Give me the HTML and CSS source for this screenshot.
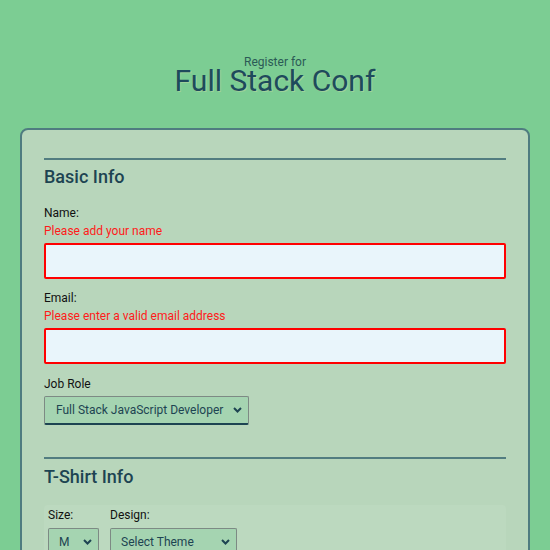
FILE: index.html
```html
<!DOCTYPE html>
<html lang="en">
<head>
<meta charset="utf-8">
<title>Register for Full Stack Conf</title>
<link rel="stylesheet" href="styles.css">
</head>
<body>
<header class="header">
  <span class="pre">Register for</span>
  <h1 class="title">Full Stack Conf</h1>
</header>
<main class="card">
  <section class="section">
    <hr class="rule">
    <h2 class="heading">Basic Info</h2>
    <div class="field first">
      <label class="label">Name:</label>
      <div class="error">Please add your name</div>
      <div class="input"></div>
    </div>
    <div class="field email">
      <label class="label">Email:</label>
      <div class="error">Please enter a valid email address</div>
      <div class="input tight"></div>
    </div>
    <div class="field job">
      <label class="label">Job Role</label>
      <div class="select role">
        <span>Full Stack JavaScript Developer</span>
        <svg class="chev" width="9" height="6" viewBox="0 0 9 6"><path d="M1 1 L4.5 4.5 L8 1" fill="none" stroke="#1d4452" stroke-width="2"/></svg>
      </div>
    </div>
  </section>
  <section class="section second">
    <hr class="rule">
    <h2 class="heading h2b">T-Shirt Info</h2>
    <div class="shirt">
      <div class="col size">
        <label class="label">Size:</label>
        <div class="select sm">
          <span>M</span>
          <svg class="chev" width="9" height="6" viewBox="0 0 9 6"><path d="M1 1 L4.5 4.5 L8 1" fill="none" stroke="#1d4452" stroke-width="2"/></svg>
        </div>
      </div>
      <div class="col design">
        <label class="label">Design:</label>
        <div class="select theme">
          <span>Select Theme</span>
          <svg class="chev" width="9" height="6" viewBox="0 0 9 6"><path d="M1 1 L4.5 4.5 L8 1" fill="none" stroke="#1d4452" stroke-width="2"/></svg>
        </div>
      </div>
    </div>
  </section>
</main>
</body>
</html>
```

FILE: styles.css
```css
html, body {
  margin: 0;
  padding: 0;
}
body {
  background: #7ccd93;
  font-family: Roboto, "Liberation Sans", sans-serif;
  height: 550px;
  overflow: hidden;
}
.header {
  display: flex;
  flex-direction: column;
  align-items: center;
  padding-top: 56px;
}
.pre {
  font-size: 12px;
  line-height: 12px;
  color: #2b5a56;
}
.title {
  margin: 2px 0 0;
  font-size: 30px;
  line-height: 22px;
  font-weight: 400;
  color: #1e4a5c;
  text-shadow: 1px 1px 0 rgba(230, 220, 170, 0.35);
}
.card {
  margin: 36px 20px 0;
  background: #b8d6bb;
  border: 2px solid #4f7c80;
  border-radius: 8px;
  padding: 28px 22px 40px;
}
.rule {
  margin: 0;
  border: 0;
  border-top: 2px solid #527d80;
  height: 0;
}
.heading {
  margin: 6px 0 0;
  font-size: 18px;
  line-height: 22px;
  font-weight: 500;
  color: #1d4452;
}
.h2b {
  margin-top: 7px;
}
.field {
  display: flex;
  flex-direction: column;
  align-items: flex-start;
}
.first {
  margin-top: 16px;
}
.email {
  margin-top: 10px;
}
.job {
  margin-top: 11px;
}
.label {
  font-size: 12px;
  line-height: 18px;
  color: #111;
}
.error {
  font-size: 12px;
  line-height: 18px;
  color: #ff1a1a;
}
.input {
  box-sizing: border-box;
  width: 100%;
  height: 36px;
  margin-top: 3px;
  background: #e9f5fb;
  border: 2px solid #ff0000;
  border-radius: 2px;
}
.input.tight {
  margin-top: 3px;
}
.select {
  box-sizing: border-box;
  height: 29px;
  display: flex;
  align-items: center;
  justify-content: space-between;
  padding: 0 6px 0 11px;
  background: #a5d4b1;
  border: 1px solid #7d8a84;
  border-bottom: 2px solid #1d4452;
  border-radius: 2px;
  font-size: 12px;
  color: #1d4452;
  margin-top: 3px;
}
.role {
  width: 205px;
}
.second {
  margin-top: 32px;
}
.shirt {
  margin-top: 17px;
  background: #bcd9bf;
  border-radius: 4px;
  padding: 1px 4px 0;
  height: 60px;
  display: flex;
  gap: 11px;
}
.col {
  display: flex;
  flex-direction: column;
  align-items: flex-start;
}
.col .select {
  margin-top: 4px;
  padding-left: 10px;
}
.sm {
  width: 51px;
}
.theme {
  width: 127px;
}
.chev {
  flex: none;
}
```
